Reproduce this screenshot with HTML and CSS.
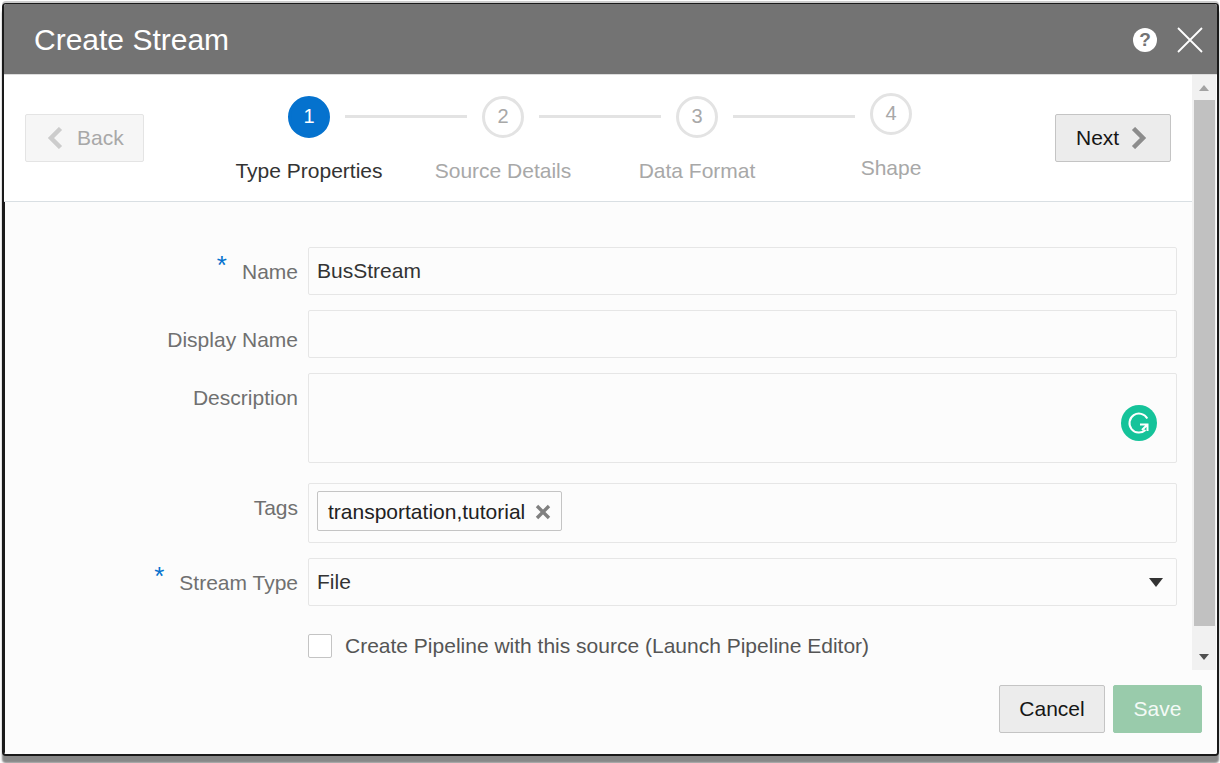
FILE: index.html
```html
<!DOCTYPE html>
<html lang="en">
<head>
  <meta charset="UTF-8">
  <title>Create Stream</title>
  <link rel="stylesheet" href="styles.css">
</head>

<body>

  <div class="dialog">

    <!-- Title bar -->
    <div class="dialog-header">
      <span class="dialog-title">Create Stream</span>
      <span class="help-icon">?</span>
      <svg class="close-icon" width="26" height="26" viewBox="0 0 26 26">
        <path d="M1 1 L25 25 M25 1 L1 25" stroke="#fff" stroke-width="1.8" fill="none"/>
      </svg>
    </div>

    <div class="dialog-main">
      <div class="dialog-scroll">

        <!-- Wizard steps -->
        <div class="wizard">
          <button class="btn btn-back" type="button">
            <svg width="18" height="22" viewBox="0 0 18 22"><path d="M14.5 1.5 L5 11 L14.5 20.5" stroke="#ccc" stroke-width="4.5" fill="none"/></svg>
            <span>Back</span>
          </button>

          <div class="steps">
            <div class="step active">
              <div class="step-num">1</div>
              <div class="step-label">Type Properties</div>
            </div>
            <div class="step">
              <div class="step-num">2</div>
              <div class="step-label">Source Details</div>
            </div>
            <div class="step">
              <div class="step-num">3</div>
              <div class="step-label">Data Format</div>
            </div>
            <div class="step last">
              <div class="step-num">4</div>
              <div class="step-label">Shape</div>
            </div>
          </div>

          <button class="btn btn-next" type="button">
            <span>Next</span>
            <svg width="18" height="22" viewBox="0 0 18 22"><path d="M3.5 1.5 L13 11 L3.5 20.5" stroke="#8c8c8c" stroke-width="4.5" fill="none"/></svg>
          </button>
        </div>

        <!-- Form -->
        <div class="form">
          <div class="row row-name">
            <label class="field-label"><span class="req">*</span>Name</label>
            <div class="field">BusStream</div>
          </div>
          <div class="row row-display">
            <label class="field-label">Display Name</label>
            <div class="field"></div>
          </div>
          <div class="row row-desc">
            <label class="field-label">Description</label>
            <div class="field field-desc">
              <svg class="grammarly" width="36" height="36" viewBox="0 0 36 36">
                <circle cx="18" cy="18" r="18" fill="#15c39a"/>
                <path d="M26.3 13.5 A9.5 9.5 0 1 0 24.5 25" stroke="#fff" stroke-width="2" fill="none"/>
                <path d="M19 19.5 H26.5 V26 M26 20 L21 25" stroke="#fff" stroke-width="2" fill="none"/>
              </svg>
            </div>
          </div>
          <div class="row row-tags">
            <label class="field-label">Tags</label>
            <div class="field field-tags">
              <span class="tag">transportation,tutorial
                <svg width="16" height="16" viewBox="0 0 16 16"><path d="M2 2 L14 14 M14 2 L2 14" stroke="#808080" stroke-width="3.4" fill="none"/></svg>
              </span>
            </div>
          </div>
          <div class="row row-type">
            <label class="field-label"><span class="req">*</span>Stream Type</label>
            <div class="field field-select">
              <span>File</span>
              <span class="caret"></span>
            </div>
          </div>
          <div class="row row-check">
            <span class="checkbox"></span>
            <span class="check-label">Create Pipeline with this source (Launch Pipeline Editor)</span>
          </div>
        </div>
      </div>

      <!-- Scrollbar -->
      <div class="scrollbar">
        <div class="arrow arrow-up"></div>
        <div class="thumb"></div>
        <div class="arrow arrow-down"></div>
      </div>
    </div>

    <!-- Footer buttons -->
    <div class="dialog-footer">
      <button class="btn btn-cancel" type="button">Cancel</button>
      <button class="btn btn-save" type="button">Save</button>
    </div>

  </div>

</body>
</html>
```

FILE: styles.css
```css
html, body {
  height: 100%;
}

body {
  margin: 0;
  background: #fff;
  font-family: "Liberation Sans", Arial, sans-serif;
  overflow: hidden;
}

.dialog {
  box-sizing: border-box;
  width: 1217px;
  height: 753px;
  margin: 3px 0 0 2px;
  border: 2px solid #1a1a1a;
  border-top-width: 1px;
  border-radius: 4px;
  background: #fcfcfc;
  box-shadow: 0 -2px 0 #ccc, 0 7px 2px #888;
  display: flex;
  flex-direction: column;
  overflow: hidden;
}

.dialog-header {
  height: 71px;
  flex: none;
  background: #737373;
  border-bottom: 1px solid #ddd;
  box-sizing: border-box;
  display: flex;
  align-items: center;
  padding: 2px 14px 0 30px;
}

.dialog-title {
  color: #fff;
  font-size: 30px;
  flex: 1;
}

.help-icon {
  width: 24px;
  height: 24px;
  border-radius: 50%;
  background: #fff;
  color: #737373;
  font-size: 19px;
  font-weight: bold;
  line-height: 24px;
  text-align: center;
  margin-right: 20px;
}

.close-icon {
  display: block;
}

.dialog-main {
  height: 595px;
  flex: none;
  display: flex;
}

.dialog-scroll {
  flex: 1;
  min-width: 0;
  display: flex;
  flex-direction: column;
}

/* wizard */
.wizard {
  height: 127px;
  flex: none;
  box-sizing: border-box;
  background: #fff;
  border-bottom: 1px solid #d9dfe3;
  display: flex;
  align-items: flex-start;
  padding: 21px 21px 0 21px;
}

.btn {
  font-family: inherit;
  font-size: 21px;
  height: 48px;
  box-sizing: border-box;
  border-radius: 2px;
  border: 1px solid #c4c4c4;
  background: #ececec;
  color: #161616;
  padding: 0;
}

.wizard .btn {
  display: flex;
  align-items: center;
  margin-top: 18px;
}

.btn-back {
  width: 119px;
  background: #f6f6f6;
  border-color: #e4e4e4;
  color: #a8a8a8;
  padding-left: 20px;
  gap: 13px;
}

.btn-next {
  width: 116px;
  padding-left: 20px;
  margin-left: auto;
  gap: 11px;
}

.steps {
  margin-left: 68px;
  display: flex;
}

.step {
  width: 194px;
  display: flex;
  flex-direction: column;
  align-items: center;
  position: relative;
  color: #a8a8a8;
}

.step-num {
  width: 42px;
  height: 42px;
  box-sizing: border-box;
  border: 3px solid #e3e3e3;
  border-radius: 50%;
  background: #fff;
  font-size: 20px;
  line-height: 34px;
  text-align: center;
}

.step:not(.last)::after {
  content: "";
  position: absolute;
  left: 133px;
  top: 19px;
  width: 122px;
  height: 3px;
  background: #e3e3e3;
}

.step-label {
  margin-top: 21px;
  font-size: 21px;
  line-height: 24px;
  white-space: nowrap;
}

.step.last {
  margin-top: -3px;
}

.step.active {
  color: #333;
}

.step.active .step-num {
  background: #0572ce;
  border-color: #0572ce;
  color: #fff;
}

/* form */
.form {
  flex: 1;
  padding: 45px 15px 0 0;
  border-left: 1px solid #1a1a1a;
}

.row {
  display: flex;
  align-items: flex-start;
}

.field-label {
  width: 293px;
  flex: none;
  margin-right: 10px;
  text-align: right;
  color: #707070;
  font-size: 21px;
  line-height: 24px;
  padding-top: 13px;
}

.req {
  color: #0572ce;
  font-size: 26px;
  line-height: 0;
  margin-right: 15px;
  position: relative;
  top: -5px;
}

.field {
  flex: 1;
  height: 48px;
  box-sizing: border-box;
  border: 1px solid #e6e6e6;
  border-radius: 2px;
  background: #fcfcfc;
  font-size: 21px;
  line-height: 46px;
  color: #333;
  padding: 0 8px;
  position: relative;
}

.row-display {
  margin-top: 15px;
}

.row-display .field-label {
  padding-top: 18px;
}

.row-desc {
  margin-top: 15px;
}

.row-desc .field-label {
  padding-top: 13px;
}

.field-desc {
  height: 90px;
}

.grammarly {
  position: absolute;
  right: 19px;
  top: 31px;
}

.row-tags {
  margin-top: 20px;
}

.field-tags {
  height: 60px;
}

.tag {
  position: absolute;
  left: 8px;
  top: 7px;
  height: 40px;
  box-sizing: border-box;
  border: 1px solid #c4c4c4;
  border-radius: 2px;
  padding: 2px 10px 0;
  color: #222;
  line-height: 36px;
  white-space: nowrap;
  display: flex;
  align-items: center;
  gap: 10px;
}

.row-type {
  margin-top: 15px;
}

.field-select {
  display: flex;
  align-items: center;
  justify-content: space-between;
  padding-right: 13px;
}

.caret {
  width: 0;
  height: 0;
  border-left: 7px solid transparent;
  border-right: 7px solid transparent;
  border-top: 9px solid #333;
}

.row-check {
  margin-top: 28px;
  padding-left: 303px;
  align-items: center;
}

.checkbox {
  width: 24px;
  height: 24px;
  box-sizing: border-box;
  border: 1px solid #c4c4c4;
  border-radius: 2px;
  background: #fff;
}

.check-label {
  margin-left: 13px;
  font-size: 21px;
  color: #555;
}

/* scrollbar */
.scrollbar {
  width: 24px;
  margin-right: 1px;
  flex: none;
  background: #f1f1f1;
  display: flex;
  flex-direction: column;
  align-items: center;
  padding: 0 1px 0 2px;
  box-sizing: border-box;
}

.thumb {
  flex: 1;
  width: 21px;
  background: #c1c1c1;
}

.arrow {
  height: 25px;
  flex: none;
  width: 100%;
  position: relative;
}

.arrow::after {
  content: "";
  position: absolute;
  left: 5px;
  border-left: 5px solid transparent;
  border-right: 5px solid transparent;
}

.arrow-up::after {
  top: 10px;
  border-bottom: 6px solid #a3a3a3;
}

.arrow-down {
  height: 44px;
}

.arrow-down::after {
  top: 28px;
  border-top: 6px solid #505050;
}

/* footer */
.dialog-footer {
  flex: 1;
  display: flex;
  justify-content: flex-end;
  align-items: flex-start;
  gap: 8px;
  padding: 15px 15px 0 0;
  background: #fcfcfc;
  border-left: 1px solid #1a1a1a;
}

.btn-cancel {
  width: 106px;
}

.btn-save {
  width: 89px;
  background: #99cbab;
  border-color: #99cbab;
  color: #f4faf6;
}
```
